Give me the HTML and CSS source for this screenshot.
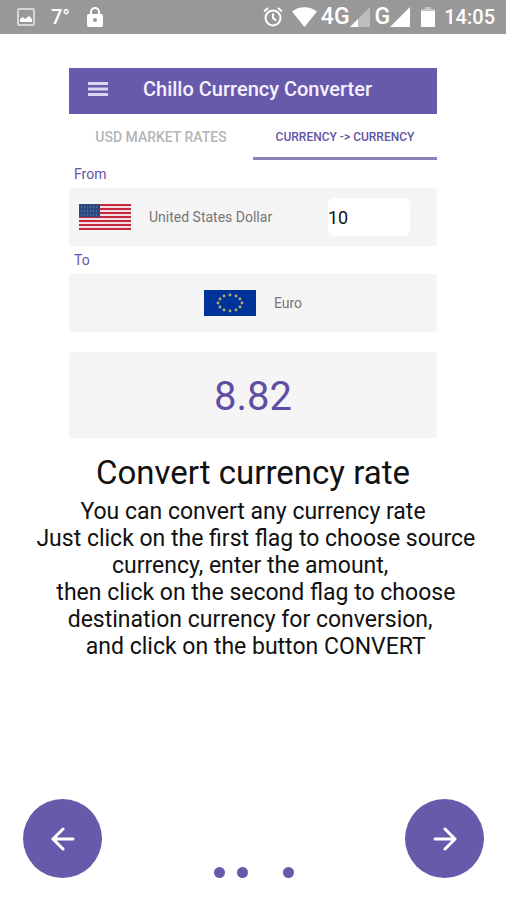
FILE: index.html
```
<!DOCTYPE html>
<html lang="en">
<head>
    <meta charset="UTF-8">
    <meta name="viewport" content="width=device-width, initial-scale=1.0">
    <title>Chillo Currency Converter</title>
    <link rel="stylesheet" href="styles.css">
</head>
<body>
    <div class="status-bar">
        <div class="status-left">
            <svg width="18" height="18" viewBox="0 0 18 18">
                <rect x="1" y="1" width="16" height="16" rx="1" fill="none" stroke="#d6d6d6" stroke-width="2"/>
                <path d="M3 14v-3l3-2 2 2 4-3 3 3v3z" fill="#fff"/>
            </svg>
            <span class="temperature">7°</span>
            <svg width="18" height="22" viewBox="0 0 18 22">
                <path d="M5 9V6a4 4 0 0 1 8 0v3" fill="none" stroke="#fff" stroke-width="2"/>
                <rect x="1" y="8" width="16" height="13" rx="2" fill="#fff"/>
                <circle cx="9" cy="14" r="2" fill="#989898"/>
            </svg>
        </div>
        <div class="status-right">
            <svg class="alarm" width="20" height="20" viewBox="0 0 20 20" fill="none" stroke="#fff" stroke-width="2">
                <circle cx="10" cy="11" r="7.5"/>
                <path d="M10 6.5V11l3 2.500M1 4.500l4-3.500M19 4.500l-4-3.500"/>
            </svg>
            <svg class="wifi" width="25" height="20" viewBox="0 0 25 20">
                <path d="M0 4.500C7-1.200 18-1.200 25 4.500L12.500 20z" fill="#fff"/>
            </svg>
            <span class="network">4G</span>
            <svg class="signal" width="20" height="20" viewBox="0 0 20 20">
                <path d="M0 20L20 0v20z" fill="#bdbdbd"/>
                <path d="M0 20l8-8v8z" fill="#fff"/>
            </svg>
            <span class="network">G</span>
            <svg class="signal" width="20" height="20" viewBox="0 0 20 20">
                <path d="M0 20L20 0v20z" fill="#fff"/>
            </svg>
            <svg class="battery" width="14" height="20" viewBox="0 0 14 20">
                <path d="M4 0h6v2h4v3H0V2h4z" fill="#c4c4c4"/>
                <path d="M0 4h14v15a1 1 0 0 1-1 1H1a1 1 0 0 1-1-1z" fill="#fff"/>
            </svg>
            <span class="clock">14:05</span>
        </div>
    </div>

    <main>
        <div class="preview">
            <div class="app-bar">
                <button class="menu-button" aria-label="Menu">
                    <svg width="20" height="14" viewBox="0 0 20 14" stroke="#dcd6f2" stroke-width="3">
                        <path d="M0 1.500h20M0 7h20M0 12.500h20"/>
                    </svg>
                </button>
                <span class="app-title">Chillo Currency Converter</span>
            </div>
            <div class="tabs">
                <button class="tab">USD MARKET RATES</button>
                <button class="tab active">CURRENCY -&gt; CURRENCY</button>
            </div>

            <label class="field-label" for="amount">From</label>
            <div class="currency-row source">
                <svg class="flag" width="52" height="26" viewBox="0 0 52 26">
                    <rect width="52" height="26" fill="#f3dfe3"/>
                    <path d="M0 1h52M0 5h52M0 9h52M0 13h52M0 17h52M0 21h52M0 25h52" stroke="#c5283d" stroke-width="2"/>
                    <rect width="21" height="13" fill="#2b4a80"/>
                    <path d="M2 3h18M2 7h18M2 11h18" stroke="#7f93b5" stroke-dasharray="1 2"/>
                </svg>
                <span class="currency-name">United States Dollar</span>
                <input class="amount" id="amount" type="text" inputmode="decimal" value="10">
            </div>

            <div class="field-label">To</div>
            <div class="currency-row target">
                <svg class="flag" width="52" height="26" viewBox="0 0 52 26">
                    <rect width="52" height="26" fill="#003399"/>
                    <g fill="#b9ad62">
                        <circle cx="26" cy="5" r="1.400"/>
                        <circle cx="32" cy="6" r="1.400"/>
                        <circle cx="36" cy="9" r="1.400"/>
                        <circle cx="38" cy="13" r="1.400"/>
                        <circle cx="36" cy="17" r="1.400"/>
                        <circle cx="32" cy="20" r="1.400"/>
                        <circle cx="26" cy="21" r="1.400"/>
                        <circle cx="20" cy="20" r="1.400"/>
                        <circle cx="16" cy="17" r="1.400"/>
                        <circle cx="14" cy="13" r="1.400"/>
                        <circle cx="16" cy="9" r="1.400"/>
                        <circle cx="20" cy="6" r="1.400"/>
                    </g>
                </svg>
                <span class="currency-name">Euro</span>
            </div>

            <div class="result">8.82</div>
        </div>

        <h1>Convert currency rate</h1>
        <p class="description">
            You can convert any currency rate<br>
            &nbsp;Just click on the first flag to choose source<br>
            currency, enter the amount,&nbsp;<br>
            &nbsp;then click on the second flag to choose<br>
            destination currency for conversion,&nbsp;<br>
            &nbsp;and click on the button CONVERT
        </p>
    </main>

    <footer class="pager">
        <button class="round-button" aria-label="Previous">
            <svg width="24" height="24" viewBox="0 0 24 24">
                <path d="M22 12H2M12 2L2 12l10 10"/>
            </svg>
        </button>
        <div class="dots">
            <span class="dot"></span>
            <span class="dot"></span>
            <span class="dot current"></span>
            <span class="dot"></span>
        </div>
        <button class="round-button" aria-label="Next">
            <svg width="24" height="24" viewBox="0 0 24 24">
                <path d="M2 12h20M12 2l10 10-10 10"/>
            </svg>
        </button>
    </footer>
</body>
</html>
```

FILE: styles.css
```
* {
    box-sizing: border-box;
}
body {
    font-family: Roboto, sans-serif;
    margin: 0;
    min-height: 100vh;
    display: flex;
    flex-direction: column;
    background: #fff;
    color: #111;
}
button {
    font-family: inherit;
    border: none;
    padding: 0;
    background: none;
    cursor: pointer;
}
svg {
    display: block;
    flex-shrink: 0;
}

/* Status bar */
.status-bar {
    display: flex;
    justify-content: space-between;
    align-items: center;
    height: 34px;
    padding: 0 11px 0 17px;
    background: #989898;
    color: #fff;
}
.status-left,
.status-right {
    display: flex;
    align-items: center;
}
.status-left {
    gap: 16px;
}
.temperature,
.clock {
    font-size: 20px;
    font-weight: 500;
    line-height: 24px;
}
.network {
    font-size: 23px;
    font-weight: 500;
    line-height: 24px;
}
.alarm { margin-right: 9px; }
.wifi { margin-right: 4px; }
.signal { margin-right: 5px; }
.battery { margin: 0 9px 0 6px; }

main {
    flex: 1;
    padding-top: 34px;
    text-align: center;
}

/* App preview */
.preview {
    margin: 0 69px;
}
.app-bar {
    display: flex;
    align-items: center;
    height: 46px;
    padding: 0 19px 5px;
    background: #685aab;
}
.app-title {
    margin-left: 35px;
    font-size: 20px;
    font-weight: 500;
    line-height: 24px;
    color: #f4f0ff;
    white-space: nowrap;
}
.tabs {
    display: grid;
    grid-template-columns: 1fr 1fr;
    height: 46px;
}
.tab {
    padding-top: 3px;
    border-bottom: 3px solid transparent;
    font-size: 14px;
    font-weight: 500;
    color: #b5b5b5;
}
.tab.active {
    border-bottom-color: #8d80bd;
    font-size: 12px;
    color: #6453a6;
}
.field-label {
    display: block;
    padding-left: 5px;
    font-size: 14px;
    line-height: 28px;
    text-align: left;
    color: #6655a8;
}
.currency-row {
    display: flex;
    align-items: center;
    height: 58px;
    border-radius: 3px;
    background: #f5f5f5;
}
.source {
    padding: 0 27px 0 10px;
}
.target {
    justify-content: center;
}
.currency-name {
    margin-left: 18px;
    font-size: 14px;
    color: #757575;
    white-space: nowrap;
}
.amount {
    width: 82px;
    height: 38px;
    margin-left: auto;
    padding: 0;
    border: none;
    border-radius: 6px;
    background: #fff;
    font-family: inherit;
    font-size: 18px;
    color: #111;
}
.result {
    margin-top: 20px;
    padding-top: 4px;
    border-radius: 3px;
    background: #f5f5f5;
    font-size: 40px;
    line-height: 82px;
    color: #5f4ea3;
}

h1 {
    margin: 14px 0 4px;
    font-size: 33px;
    font-weight: 400;
    line-height: 42px;
}
.description {
    margin: 0;
    font-size: 23px;
    line-height: 27px;
}

/* Bottom navigation */
.pager {
    display: flex;
    justify-content: space-between;
    align-items: flex-end;
    padding: 0 22px 22px 23px;
}
.round-button {
    display: flex;
    justify-content: center;
    align-items: center;
    width: 79px;
    height: 79px;
    border-radius: 50%;
    background: #685aab;
}
.round-button svg {
    fill: none;
    stroke: #fff;
    stroke-width: 3;
    stroke-linecap: round;
    stroke-linejoin: round;
}
.dots {
    display: flex;
    gap: 12px;
}
.dot {
    width: 11px;
    height: 11px;
    border-radius: 50%;
    background: #685aab;
}
.dot.current {
    background: #fff;
}
```
